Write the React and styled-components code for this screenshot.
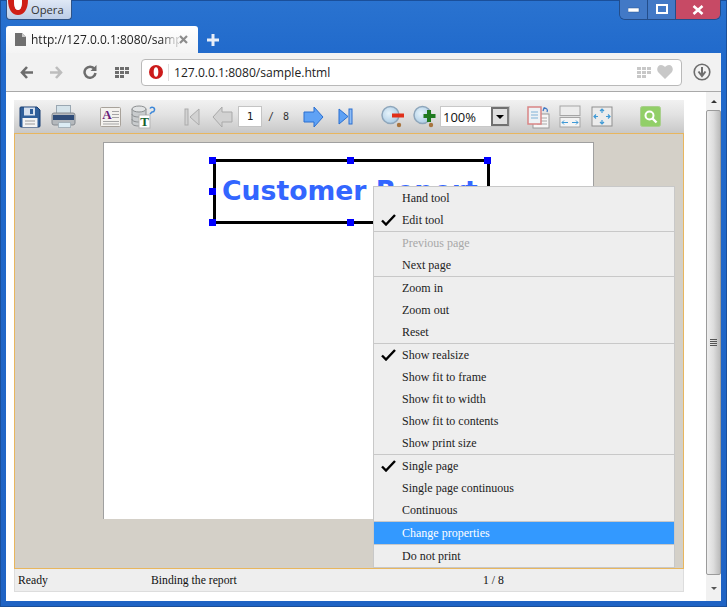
import React from 'react';
import styled, { createGlobalStyle } from 'styled-components';

const GlobalStyle = createGlobalStyle`
  html, body {
    margin: 0;
    padding: 0;
    background: #1f63c4;
  }
`;

const Window = styled.div`
  position: relative;
  box-sizing: border-box;
  display: flex;
  flex-direction: column;
  width: 727px;
  height: 607px;
  overflow: hidden;
  padding: 0 6px 6px;
  background: linear-gradient(#2a73d0 0, #2069cb 60px, #1f63c4 100%);
  box-shadow: inset 0 0 0 1px #1a4f9a;
  font-family: "Open Sans", sans-serif;
`;

const TitleBar = styled.div`
  display: flex;
  justify-content: space-between;
  height: 26px;
  flex: none;
`;

const OperaButton = styled.div`
  box-sizing: border-box;
  display: flex;
  width: 66px;
  height: 20px;
  align-items: center;
  padding-left: 24px;
  border: 1px solid #2f5386;
  border-top: none;
  border-radius: 0 0 4px 4px;
  background: linear-gradient(#dfe8f5, #bccde6);
  color: #333;
  font-size: 11.2px;
  position: relative;
`;

const OperaMark = styled.svg`
  position: absolute;
  left: 0;
  top: 0;
`;

const Controls = styled.div`
  display: flex;
  height: 20px;
  border: 1px solid #234d8a;
  border-top: none;
  border-radius: 0 0 6px 6px;
  overflow: hidden;
  box-sizing: border-box;
`;

const ControlButton = styled.div`
  box-sizing: border-box;
  display: flex;
  align-items: center;
  justify-content: center;
  width: ${p => p.$width}px;
  background: ${p => (p.$close ? '#c74a65' : '#4279c6')};
  border-left: ${p => (p.$first ? 'none' : '1px solid #234d8a')};
`;

const TabStrip = styled.div`
  display: flex;
  align-items: center;
  height: 27px;
  flex: none;
`;

const Tab = styled.div`
  box-sizing: border-box;
  display: flex;
  align-items: center;
  width: 192px;
  height: 27px;
  padding: 0 10px 0 9px;
  background: linear-gradient(#fff, #f4f4f4);
  border-radius: 3px 3px 0 0;
  font-size: 12px;
  color: #222;
`;

const TabIcon = styled.svg`
  flex: none;
`;

const TabTitle = styled.span`
  flex: 1;
  min-width: 0;
  margin-left: 5px;
  white-space: nowrap;
  -webkit-mask-image: linear-gradient(90deg, #000 88%, rgba(0, 0, 0, 0.25) 97%);
  mask-image: linear-gradient(90deg, #000 88%, rgba(0, 0, 0, 0.25) 97%);
`;

const NewTab = styled.svg`
  margin-left: 9px;
`;

const NavBar = styled.div`
  box-sizing: border-box;
  display: flex;
  align-items: center;
  height: 39px;
  flex: none;
  background: #f2f2f2;
  border-bottom: 1px solid #a9a9a9;
`;

const NavIcon = styled.svg`
  flex: none;
  margin-left: ${p => p.$left}px;
`;

const AddressBox = styled.div`
  box-sizing: border-box;
  display: flex;
  align-items: center;
  width: 541px;
  height: 27px;
  margin-left: 11px;
  padding: 0 8px 0 7px;
  background: #fff;
  border: 1px solid #b9b9b9;
  border-radius: 4px;
  font-size: 12.1px;
  color: #222;
`;

const AddressDivider = styled.span`
  width: 1px;
  height: 17px;
  margin: 0 5px;
  background: #ddd;
`;

const AddressText = styled.span`
  flex: 1;
`;

const Heart = styled.svg`
  margin-left: 5px;
`;

const Content = styled.div`
  display: flex;
  flex: 1;
  min-height: 0;
  background: #fff;
`;

const Main = styled.div`
  flex: 1;
  padding: 8px 0 10px 8px;
  display: flex;
  flex-direction: column;
  min-width: 0;
`;

const Viewer = styled.div`
  display: flex;
  flex-direction: column;
  flex: 1;
  width: 670px;
`;

const Toolbar = styled.div`
  display: flex;
  align-items: center;
  height: 33px;
  flex: none;
  background: linear-gradient(#f1f1f1, #e2e2e2 45%, #c8c8c8 100%);
`;

const ToolIcon = styled.svg`
  flex: none;
  margin-left: ${p => p.$left}px;
`;

const PageInput = styled.div`
  box-sizing: border-box;
  flex: none;
  width: 24px;
  height: 21px;
  margin-left: 5px;
  background: #fff;
  border: 1px solid #c4c4c4;
  font: 11px "DejaVu Sans Mono", monospace;
  color: #222;
  display: flex;
  align-items: center;
  justify-content: center;
`;

const PageCount = styled.span`
  flex: none;
  width: 41px;
  padding-left: 6px;
  box-sizing: border-box;
  font: 10px "DejaVu Sans Mono", monospace;
  word-spacing: 3px;
  color: #333;
  white-space: pre;
`;

const ZoomCombo = styled.div`
  box-sizing: border-box;
  display: flex;
  flex: none;
  align-items: center;
  justify-content: space-between;
  width: 70px;
  height: 21px;
  margin-left: 4px;
  padding-left: 2px;
  background: #fff;
  border: 1px solid #c8c8c8;
  font: 13px "Open Sans", sans-serif;
  color: #111;
`;

const ComboArrow = styled.div`
  box-sizing: border-box;
  display: flex;
  align-items: center;
  justify-content: center;
  width: 18px;
  height: 19px;
  background: #e0e0e0;
  border: 2px solid #707070;
  border-right-color: #808080;
  &::after {
    content: '';
    border-left: 4px solid transparent;
    border-right: 4px solid transparent;
    border-top: 4px solid #000;
  }
`;

const Canvas = styled.div`
  box-sizing: border-box;
  flex: none;
  height: 436px;
  padding: 8px 0 0 88px;
  background: #d4d0c8;
  border: 1px solid #e8b65e;
`;

const Page = styled.div`
  position: relative;
  box-sizing: border-box;
  width: 491px;
  height: 377px;
  background: #fff;
  border: 1px solid #a0a0a0;
  border-bottom: none;
`;

const ReportBox = styled.div`
  position: absolute;
  box-sizing: border-box;
  left: 109px;
  top: 16px;
  width: 277px;
  height: 65px;
  padding: 0 0 2px 6px;
  display: flex;
  align-items: center;
  border: 3px solid #000;
  font: bold 26.67px "DejaVu Sans", sans-serif;
  color: #3366ff;
  white-space: nowrap;
`;

const Handle = styled.span`
  position: absolute;
  width: 7px;
  height: 7px;
  left: ${p => p.$x}px;
  top: ${p => p.$y}px;
  background: #0000ff;
`;

const StatusBar = styled.div`
  box-sizing: border-box;
  display: grid;
  grid-template-columns: 133px 332px 1fr;
  align-items: center;
  height: 23px;
  flex: none;
  padding-left: 3px;
  background: #eee;
  border: 1px solid #ddd;
  border-top: none;
  font: 11.7px "Liberation Serif", serif;
  color: #111;
`;

const Scrollbar = styled.div`
  display: flex;
  flex-direction: column;
  flex: none;
  align-items: stretch;
  width: 15px;
  background: #f1f1f1;
`;

const ScrollArrow = styled.div`
  display: flex;
  flex: none;
  align-items: center;
  justify-content: center;
  height: ${p => p.$height}px;
  &::after {
    content: '';
    border-left: 3px solid transparent;
    border-right: 3px solid transparent;
    ${p => (p.$down ? 'border-top: 3px solid #555;' : 'border-bottom: 3px solid #333;')}
  }
`;

const ScrollThumb = styled.div`
  box-sizing: border-box;
  display: flex;
  flex: 1;
  flex-direction: column;
  align-items: center;
  justify-content: center;
  gap: 1px;
  border: 1px solid #9b9b9b;
  border-radius: 2px;
  background: linear-gradient(90deg, #eee, #ddd 50%, #bbb);
`;

const GripLine = styled.span`
  width: 7px;
  height: 1px;
  background: #555;
`;

const Menu = styled.div`
  position: absolute;
  left: 373px;
  top: 186px;
  box-sizing: border-box;
  width: 302px;
  background: #eee;
  border: 1px solid #c8c8c8;
  font: 12px "Liberation Serif", serif;
  color: #222;
`;

const MenuGroup = styled.div`
  & + & {
    border-top: 1px solid #c8c8c8;
  }
`;

const MenuItem = styled.div`
  position: relative;
  height: 22px;
  line-height: 22px;
  padding-left: 28px;
  background: ${p => (p.$active ? '#3399ff' : 'transparent')};
  color: ${p => (p.$active ? '#fff' : p.$disabled ? '#a8a8a8' : '#222')};
`;

const Check = styled.svg`
  position: absolute;
  left: 7px;
  top: 5px;
`;

const SaveIcon = () => (
  <ToolIcon $left={5} width="22" height="22" viewBox="0 0 22 22">
    <path d="M2 1h16l3 3v16a1 1 0 0 1-1 1H2a1 1 0 0 1-1-1V2a1 1 0 0 1 1-1z" fill="#2f5f9a" stroke="#1b3f72" />
    <rect x="5" y="1.500" width="11" height="8" fill="#d6e0ee" />
    <rect x="11" y="3" width="3" height="5" fill="#2f5f9a" />
    <rect x="3.500" y="12" width="15" height="9" fill="#f4f4f4" />
    <path d="M6 15h10M6 18h10" stroke="#9a9a9a" />
  </ToolIcon>
);

const PrintIcon = () => (
  <ToolIcon $left={10} width="25" height="23" viewBox="0 0 25 23">
    <rect x="5.500" y="0.500" width="14" height="9" fill="#d5e3ea" stroke="#9aa7b2" />
    <path d="M3 8h19a2 2 0 0 1 2 2v8a2 2 0 0 1-2 2H3a2 2 0 0 1-2-2v-8a2 2 0 0 1 2-2z" fill="#b4b8bc" stroke="#858a90" />
    <rect x="2" y="10" width="21" height="5" fill="#2f4c78" />
    <rect x="7.500" y="17.500" width="12" height="5" fill="#dcecf4" stroke="#a7b3bb" />
  </ToolIcon>
);

const TextIcon = () => (
  <ToolIcon $left={24} width="21" height="20" viewBox="0 0 21 20">
    <rect x="0.500" y="0.500" width="20" height="19" rx="1" fill="#f4f2ee" stroke="#a8a29a" />
    <path d="M12 4.500h7M12 7.500h7M12 10.500h7M3 14.500h16M3 17h16" stroke="#a5a5a5" />
    <text x="7" y="12" textAnchor="middle" fontFamily="Liberation Serif" fontWeight="bold" fontSize="13" fill="#6b1f7a">A</text>
  </ToolIcon>
);

const DataIcon = () => (
  <ToolIcon $left={10} width="25" height="24" viewBox="0 0 25 24">
    <path d="M1 4v14c0 2 3 3 7 3s7-1 7-3V4z" fill="#c9ccce" stroke="#8c8f91" />
    <ellipse cx="8" cy="4" rx="7" ry="3" fill="#e2e4e5" stroke="#8c8f91" />
    <path d="M1 9c0 2 3 3 7 3s7-1 7-3M1 14c0 2 3 3 7 3" fill="none" stroke="#8c8f91" />
    <rect x="8" y="10" width="11" height="13" fill="#fff" stroke="#b5b5b5" />
    <text x="13.500" y="21" textAnchor="middle" fontFamily="Liberation Serif" fontWeight="bold" fontSize="13" fill="#14602c">T</text>
    <path d="M19 3.500a2.400 2.400 0 1 1 2 3.500l-2 2" fill="none" stroke="#3a86d8" strokeWidth="1.500" />
  </ToolIcon>
);

const FirstIcon = () => (
  <ToolIcon $left={28} width="16" height="18" viewBox="0 0 16 18">
    <rect x="1" y="1" width="3" height="16" fill="#d2d2d2" stroke="#ababab" />
    <path d="M15 1v16L6 9z" fill="#d2d2d2" stroke="#ababab" />
  </ToolIcon>
);

const PrevIcon = () => (
  <ToolIcon $left={12} width="21" height="22" viewBox="0 0 21 22">
    <path d="M10 1v5h10v10H10v5L1 11z" fill="#d2d2d2" stroke="#a9a9a9" strokeLinejoin="round" />
  </ToolIcon>
);

const NextIcon = () => (
  <ToolIcon $left={0} width="21" height="22" viewBox="0 0 21 22">
    <path d="M11 1v5H1v10h10v5l9-10z" fill="#5fa2f5" stroke="#2a6fd0" strokeLinejoin="round" />
  </ToolIcon>
);

const LastIcon = () => (
  <ToolIcon $left={14} width="15" height="17" viewBox="0 0 15 17">
    <path d="M1 1v15l9-7.500z" fill="#5fa2f5" stroke="#2a6fd0" />
    <rect x="11" y="1" width="3" height="15" fill="#8fbdf5" stroke="#2a6fd0" />
  </ToolIcon>
);

const ZoomIcon = ({ left, plus }) => (
  <ToolIcon $left={left} width="23" height="23" viewBox="0 0 23 23">
    <defs>
      <radialGradient id={plus ? 'lensPlus' : 'lensMinus'} cx="0.4" cy="0.4" r="0.7">
        <stop offset="0" stopColor="#e6f3fb" />
        <stop offset="1" stopColor="#a6c8e2" />
      </radialGradient>
    </defs>
    <circle cx="9.500" cy="10" r="8.500" fill={`url(#${plus ? 'lensPlus' : 'lensMinus'})`} stroke="#8ea6bb" strokeWidth="1.500" />
    <circle cx="18" cy="20" r="2.200" fill="#a8743e" />
    {plus ? (
      <path d="M16 5v12M10.500 11h12" stroke="#1f7a1f" strokeWidth="4" />
    ) : (
      <path d="M11 10.500h12" stroke="#e0301a" strokeWidth="4" />
    )}
  </ToolIcon>
);

const PagesIcon = () => (
  <ToolIcon $left={17} width="23" height="24" viewBox="0 0 23 24">
    <rect x="6" y="9" width="16" height="14" fill="#f6f6f6" stroke="#9a9a9a" />
    <path d="M10 13h10M10 16h10M10 19h10" stroke="#aaa" />
    <rect x="1" y="2" width="13" height="17" fill="#eef2f5" stroke="#d98585" strokeWidth="1.500" />
    <path d="M4 7h7M4 10h7M4 13h7" stroke="#7fb1d6" />
    <path d="M16 6l1-3 3 1M17 3c3 0 4 2 3 4" fill="none" stroke="#3f78c4" strokeWidth="1.300" />
  </ToolIcon>
);

const FitWidthIcon = () => (
  <ToolIcon $left={9} width="22" height="23" viewBox="0 0 22 23">
    <rect x="1" y="1" width="20" height="9.500" fill="#ececec" stroke="#a5a5a5" />
    <rect x="1" y="12.500" width="20" height="9.500" fill="#f4f4f4" stroke="#a5a5a5" />
    <path d="M3 17.500h6M3 17.500l2-2M3 17.500l2 2M19 17.500h-6M19 17.500l-2-2M19 17.500l-2 2" fill="none" stroke="#3f9ad6" />
  </ToolIcon>
);

const FitPageIcon = () => (
  <ToolIcon $left={10} width="22" height="21" viewBox="0 0 22 21">
    <rect x="1" y="1" width="20" height="19" fill="#ececec" stroke="#8f8f8f" />
    <path d="M11 3v4M9 5l2-2 2 2M11 18v-4M9 16l2 2 2-2M3 10.500h4M5 8.500l-2 2 2 2M19 10.500h-4M17 8.500l2 2-2 2" fill="none" stroke="#3f9ad6" strokeWidth="1.200" />
  </ToolIcon>
);

const SearchIcon = () => (
  <ToolIcon $left={27} width="21" height="21" viewBox="0 0 21 21">
    <rect x="0.500" y="0.500" width="20" height="20" rx="2" fill="#92cf68" stroke="#a9cf8d" />
    <circle cx="9.500" cy="9.500" r="4" fill="none" stroke="#fff" strokeWidth="2" />
    <path d="M12.500 12.500l4 4" stroke="#fff" strokeWidth="2.400" />
  </ToolIcon>
);

const menuGroups = [
  [{ label: 'Hand tool' }, { label: 'Edit tool', checked: true }],
  [{ label: 'Previous page', disabled: true }, { label: 'Next page' }],
  [{ label: 'Zoom in' }, { label: 'Zoom out' }, { label: 'Reset' }],
  [
    { label: 'Show realsize', checked: true },
    { label: 'Show fit to frame' },
    { label: 'Show fit to width' },
    { label: 'Show fit to contents' },
    { label: 'Show print size' },
  ],
  [{ label: 'Single page', checked: true }, { label: 'Single page continuous' }, { label: 'Continuous' }],
  [{ label: 'Change properties', active: true }],
  [{ label: 'Do not print' }],
];

const handles = [
  [105, 14], [243, 14], [380, 14],
  [105, 45], [105, 76], [243, 76], [380, 76],
];

const App = () => (
  <Window>
    <GlobalStyle />
    <TitleBar>
      <OperaButton>
        <OperaMark width="22" height="16" viewBox="0 0 22 16">
          <path d="M1 0c0 9 4 15 10 15S21 9 21 0h-6c0 6-1 10-4 10S7 6 7 0z" fill="#cf1f16" />
          <path d="M7 0c0 6 1 10 4 10s4-4 4-10z" fill="#fff" />
        </OperaMark>
        Opera
      </OperaButton>
      <Controls>
        <ControlButton $first $width={27}>
          <svg width="12" height="6" viewBox="0 0 12 6"><rect y="1" width="11" height="4" fill="#fff" stroke="#2b5490" strokeWidth="0.500" /></svg>
        </ControlButton>
        <ControlButton $width={28}>
          <svg width="12" height="11" viewBox="0 0 12 11"><rect x="1" y="1" width="10" height="8" fill="none" stroke="#fff" strokeWidth="2" /></svg>
        </ControlButton>
        <ControlButton $close $width={45}>
          <svg width="12" height="10" viewBox="0 0 12 10"><path d="M1.500 1l9 8M10.500 1l-9 8" stroke="#fff" strokeWidth="2.600" /></svg>
        </ControlButton>
      </Controls>
    </TitleBar>
    <TabStrip>
      <Tab>
        <TabIcon width="11" height="13" viewBox="0 0 11 13"><path d="M0 0h7l4 4v9H0z" fill="#6f6f6f" /><path d="M7 0v4h4z" fill="#c8c8c8" /></TabIcon>
        <TabTitle>http://127.0.0.1:8080/samp</TabTitle>
        <TabIcon width="9" height="9" viewBox="0 0 9 9"><path d="M1 1l7 7M8 1L1 8" stroke="#8c8c8c" strokeWidth="2.200" /></TabIcon>
      </Tab>
      <NewTab width="12" height="12" viewBox="0 0 12 12"><path d="M6 0v12M0 6h12" stroke="#e8eef8" strokeWidth="3" /></NewTab>
    </TabStrip>
    <NavBar>
      <NavIcon $left={14} width="13" height="13" viewBox="0 0 13 13"><path d="M7 1L2 6.500 7 12M2 6.500h11" fill="none" stroke="#6d6d6d" strokeWidth="2.600" /></NavIcon>
      <NavIcon $left={17} width="13" height="13" viewBox="0 0 13 13"><path d="M6 1l5 5.500L6 12M11 6.500H0" fill="none" stroke="#bdbdbd" strokeWidth="2.600" /></NavIcon>
      <NavIcon $left={20} width="14" height="14" viewBox="0 0 14 14"><path d="M11.500 4A5.500 5.500 0 1 0 12.500 8" fill="none" stroke="#6d6d6d" strokeWidth="2.500" /><path d="M13.500 0v6h-6z" fill="#6d6d6d" /></NavIcon>
      <NavIcon $left={18} width="15" height="11" viewBox="0 0 15 11"><path d="M0 0h4v3H0zM5 0h4v3H5zM10 0h4v3h-4zM0 4h4v3H0zM5 4h4v3H5zM10 4h4v3h-4zM0 8h4v3H0zM5 8h4v3H5z" fill="#6d6d6d" /></NavIcon>
      <AddressBox>
        <svg width="14" height="14" viewBox="0 0 14 14"><circle cx="7" cy="7" r="7" fill="#cc1b1b" /><ellipse cx="7" cy="7" rx="2.300" ry="4.700" fill="#fff" /></svg>
        <AddressDivider />
        <AddressText>127.0.0.1:8080/sample.html</AddressText>
        <svg width="15" height="11" viewBox="0 0 15 11"><path d="M0 0h4v3H0zM5 0h4v3H5zM10 0h4v3h-4zM0 4h4v3H0zM5 4h4v3H5zM10 4h4v3h-4zM0 8h4v3H0zM5 8h4v3H5z" fill="#c8c8c8" /></svg>
        <Heart width="16" height="14" viewBox="0 0 16 14"><path d="M8 14L1 7C-1 4 1 0 4 0c2 0 3 1 4 2 1-1 2-2 4-2 3 0 5 4 3 7z" fill="#c8c8c8" /></Heart>
      </AddressBox>
      <NavIcon $left={11} width="18" height="18" viewBox="0 0 18 18"><circle cx="9" cy="9" r="7.800" fill="none" stroke="#6d6d6d" strokeWidth="1.600" /><path d="M9 4v8M5.500 8.500L9 13l3.500-4.500" fill="none" stroke="#6d6d6d" strokeWidth="2" /></NavIcon>
    </NavBar>
    <Content>
      <Main>
        <Viewer>
          <Toolbar>
            <SaveIcon />
            <PrintIcon />
            <TextIcon />
            <DataIcon />
            <FirstIcon />
            <PrevIcon />
            <PageInput>1</PageInput>
            <PageCount>/ 8</PageCount>
            <NextIcon />
            <LastIcon />
            <ZoomIcon left={28} />
            <ZoomIcon left={9} plus />
            <ZoomCombo>
              100%
              <ComboArrow />
            </ZoomCombo>
            <PagesIcon />
            <FitWidthIcon />
            <FitPageIcon />
            <SearchIcon />
          </Toolbar>
          <Canvas>
            <Page>
              <ReportBox>Customer Report</ReportBox>
              {handles.map(([x, y]) => (
                <Handle key={`${x}-${y}`} $x={x} $y={y} />
              ))}
            </Page>
          </Canvas>
          <StatusBar>
            <span>Ready</span>
            <span>Binding the report</span>
            <span>1 / 8</span>
          </StatusBar>
        </Viewer>
      </Main>
      <Scrollbar>
        <ScrollArrow $height={18} />
        <ScrollThumb>
          <GripLine />
          <GripLine />
          <GripLine />
          <GripLine />
        </ScrollThumb>
        <ScrollArrow $height={26} $down />
      </Scrollbar>
    </Content>
    <Menu>
      {menuGroups.map(group => (
        <MenuGroup key={group[0].label}>
          {group.map(item => (
            <MenuItem key={item.label} $active={item.active} $disabled={item.disabled}>
              {item.checked && (
                <Check width="15" height="12" viewBox="0 0 15 12"><path d="M1 6.500l4 4L14 1" fill="none" stroke="#000" strokeWidth="2.400" /></Check>
              )}
              {item.label}
            </MenuItem>
          ))}
        </MenuGroup>
      ))}
    </Menu>
  </Window>
);

export default App;
